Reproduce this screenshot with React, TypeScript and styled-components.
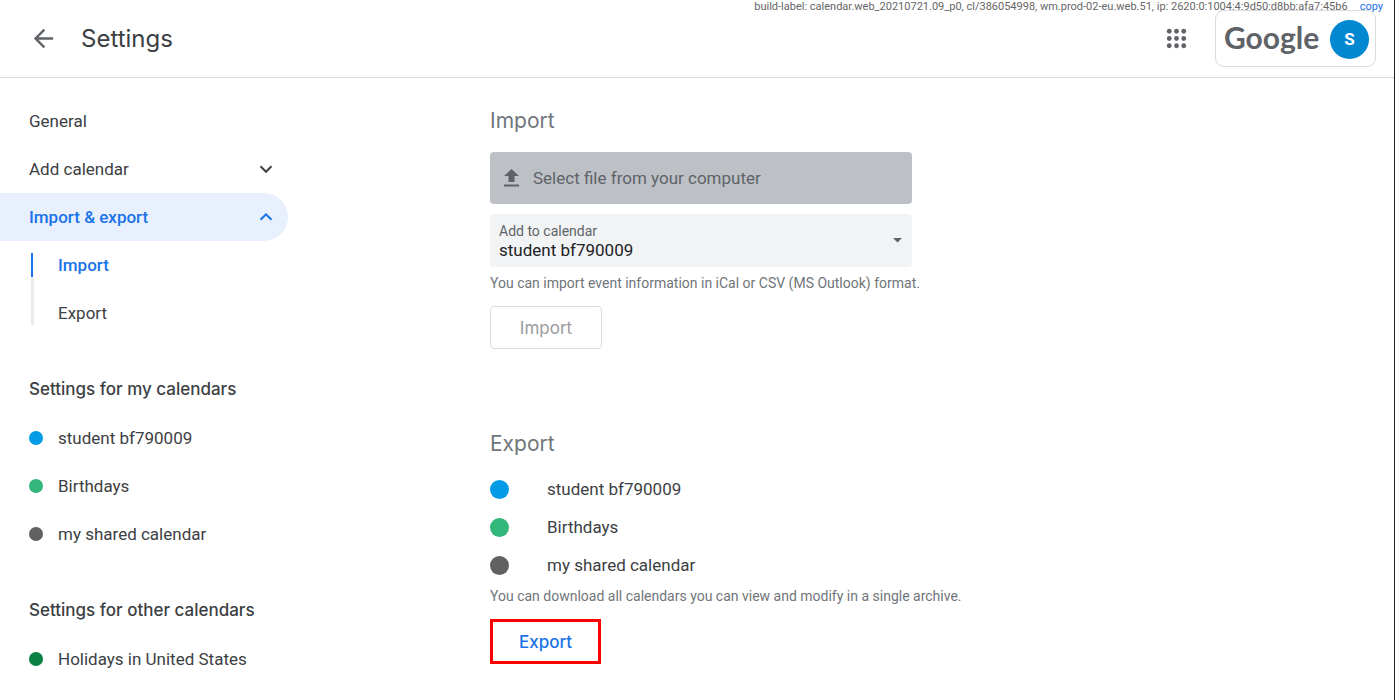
import React from "react";
import styled, { createGlobalStyle } from "styled-components";

const display = `Inter, Roboto, sans-serif`;

const GlobalStyle = createGlobalStyle`
  *, *::before, *::after { box-sizing: border-box; }
  body {
    margin: 0;
    background: #fff;
    color: #3c4043;
    font-family: Roboto, "Liberation Sans", sans-serif;
    font-size: 17px;
    line-height: 24px;
  }
  button, select { font: inherit; color: inherit; }
  a { color: inherit; text-decoration: none; }
  h1, h2, p, ul { margin: 0; padding: 0; }
  ul { list-style: none; }
  svg { display: block; flex: none; }
`;

const Page = styled.div`
  position: relative;
  min-height: 100vh;
  border-right: 1px solid #202124;
`;

const BuildLabel = styled.div`
  position: absolute;
  top: 0;
  right: 11px;
  display: flex;
  gap: 12px;
  font-size: 11px;
  line-height: 13px;
  color: #666;
  white-space: nowrap;
  a { color: #1a73e8; }
`;

const Header = styled.header`
  display: flex;
  align-items: center;
  height: 78px;
  padding: 0 18px 0 29px;
  border-bottom: 1px solid #dadce0;
`;

const IconButton = styled.button`
  display: flex;
  align-items: center;
  justify-content: center;
  width: 29px;
  height: 29px;
  padding: 0;
  border: 0;
  background: none;
  color: #5f6368;
  cursor: pointer;
`;

const PageTitle = styled.h1`
  flex: 1;
  padding-left: 23px;
  font-family: ${display};
  font-size: 24px;
  line-height: 32px;
  font-weight: 400;
`;

const AccountCard = styled.div`
  display: flex;
  align-items: center;
  justify-content: space-between;
  width: 161px;
  height: 57px;
  margin-left: 24px;
  padding: 1px 6px 0 8px;
  border: 1px solid #dadce0;
  border-radius: 9px;
`;

const Wordmark = styled.span`
  padding-bottom: 4px;
  font-family: Lato, sans-serif;
  font-size: 30px;
  line-height: 40px;
  font-weight: 700;
  color: #5f6368;
`;

const Avatar = styled.button`
  width: 39px;
  height: 39px;
  padding: 0;
  border: 0;
  border-radius: 50%;
  background: #0288d1;
  color: #fff;
  font-weight: 700;
  cursor: pointer;
`;

const Body = styled.div`
  display: flex;
  gap: 202px;
`;

const Sidebar = styled.nav`
  flex: none;
  width: 288px;
  padding-top: 19px;
`;

const NavRow = styled.button<{ $active?: boolean }>`
  display: flex;
  align-items: center;
  justify-content: space-between;
  width: 100%;
  height: 48px;
  padding: 0 12px 0 29px;
  border: 0;
  border-radius: 0 24px 24px 0;
  background: ${(p) => (p.$active ? "#e8f0fe" : "transparent")};
  color: ${(p) => (p.$active ? "#1a73e8" : "#3c4043")};
  font-weight: ${(p) => (p.$active ? 500 : 400)};
  text-align: left;
  cursor: pointer;
`;

const SubNav = styled.ul`
  display: flex;
  flex-direction: column;
  gap: 24px;
  margin: 12px 0 12px 31px;
  background: linear-gradient(#e8eaed, #e8eaed) 0 100% / 3px 48px no-repeat;
`;

const SubLink = styled.a<{ $active?: boolean }>`
  display: block;
  padding-left: 25px;
  border-left: 2px solid ${(p) => (p.$active ? "#1a73e8" : "transparent")};
  color: ${(p) => (p.$active ? "#1a73e8" : "#3c4043")};
  font-weight: ${(p) => (p.$active ? 500 : 400)};
`;

const NavGroup = styled.section`
  padding-top: 28px;
`;

const GroupTitle = styled.h2`
  padding-left: 29px;
  font-family: ${display};
  font-size: 17px;
  line-height: 49px;
  font-weight: 500;
`;

const CalendarLink = styled.a`
  display: flex;
  align-items: center;
  gap: 15px;
  height: 48px;
  padding-left: 29px;
`;

const Dot = styled.span<{ $color: string; $size: number }>`
  flex: none;
  width: ${(p) => p.$size}px;
  height: ${(p) => p.$size}px;
  border-radius: 50%;
  background: ${(p) => p.$color};
`;

const Main = styled.main`
  flex: 1;
  min-width: 0;
  padding: 27px 29px 29px 0;
`;

const Panel = styled.section`
  & + & { padding-top: 79px; }
`;

const PanelTitle = styled.h2`
  font-family: ${display};
  font-size: 21px;
  line-height: 32px;
  font-weight: 400;
  color: #70757a;
`;

const UploadButton = styled.button`
  display: flex;
  align-items: center;
  gap: 14px;
  width: 100%;
  max-width: 422px;
  height: 52px;
  margin: 15px 0 10px;
  padding: 0 14px;
  border: 0;
  border-radius: 4px;
  background: #bdc1c6;
  color: #5f6368;
  cursor: pointer;
`;

const SelectField = styled.div`
  position: relative;
  max-width: 422px;
  height: 53px;
  border-radius: 4px;
  background: #f1f3f4;
  color: #5f6368;
  svg {
    position: absolute;
    right: 10px;
    top: 24px;
    pointer-events: none;
  }
`;

const SelectLabel = styled.label`
  position: absolute;
  left: 9px;
  top: 8px;
  font-size: 14px;
  line-height: 18px;
  pointer-events: none;
`;

const Select = styled.select`
  appearance: none;
  width: 100%;
  height: 53px;
  padding: 21px 29px 2px 9px;
  border: 0;
  border-radius: 4px;
  background: transparent;
  color: #202124;
`;

const Hint = styled.p`
  font-size: 14px;
  line-height: 24px;
  color: #70757a;
`;

const ImportHint = styled(Hint)`
  margin: 4px 0 11px;
`;

const ExportHint = styled(Hint)`
  margin-bottom: 11px;
`;

const ActionButton = styled.button<{ $marked?: boolean }>`
  display: block;
  width: ${(p) => (p.$marked ? 111 : 112)}px;
  height: ${(p) => (p.$marked ? 45 : 43)}px;
  padding: 0;
  border: ${(p) => (p.$marked ? "3px solid #f00" : "1px solid #dadce0")};
  border-radius: ${(p) => (p.$marked ? 0 : 4)}px;
  background: #fff;
  color: ${(p) => (p.$marked ? "#1a73e8" : "#9a9a9a")};
  font-family: ${display};
  font-size: 17px;
  font-weight: ${(p) => (p.$marked ? 500 : 400)};
`;

const ExportList = styled.ul`
  padding-top: 10px;
`;

const ExportRow = styled.li`
  display: flex;
  align-items: center;
  gap: 38px;
  height: 38px;
`;

function Chevron({ up }: { up?: boolean }) {
  return (
    <svg width="20" height="20" viewBox="0 0 20 20" fill="none" stroke="currentColor" strokeWidth="2">
      <path d={up ? "M4.5 12.8 10 7.3l5.5 5.5" : "M4.5 7.3 10 12.8l5.5-5.5"} />
    </svg>
  );
}

const calendars = [
  { name: "student bf790009", color: "#039be5" },
  { name: "Birthdays", color: "#33b679" },
  { name: "my shared calendar", color: "#616161" },
];
const otherCalendars = [{ name: "Holidays in United States", color: "#0b8043" }];

function CalendarGroup({ title, items }: { title: string; items: typeof calendars }) {
  return (
    <NavGroup>
      <GroupTitle>{title}</GroupTitle>
      <ul>
        {items.map((c) => (
          <li key={c.name}>
            <CalendarLink href="#calendar">
              <Dot $color={c.color} $size={14} />
              {c.name}
            </CalendarLink>
          </li>
        ))}
      </ul>
    </NavGroup>
  );
}

export default function App() {
  return (
    <Page>
      <GlobalStyle />
      <Header>
        <IconButton aria-label="Go back">
          <svg width="29" height="29" viewBox="0 0 24 24" fill="currentColor">
            <path d="M20 11H7.83l5.59-5.59L12 4l-8 8 8 8 1.41-1.41L7.83 13H20v-2z" />
          </svg>
        </IconButton>
        <PageTitle>Settings</PageTitle>
        <IconButton aria-label="Google apps">
          <svg width="29" height="29" viewBox="0 0 24 24" fill="currentColor">
            {[6, 12, 18].map((y) => [6, 12, 18].map((x) => <circle key={`${x}-${y}`} cx={x} cy={y} r="2" />))}
          </svg>
        </IconButton>
        <AccountCard>
          <Wordmark>Google</Wordmark>
          <Avatar aria-label="Account S">S</Avatar>
        </AccountCard>
      </Header>
      <BuildLabel>
        <span>build-label: calendar.web_20210721.09_p0, cl/386054998, wm.prod-02-eu.web.51, ip: 2620:0:1004:4:9d50:d8bb:afa7:45b6</span>
        <a href="#copy">copy</a>
      </BuildLabel>
      <Body>
        <Sidebar>
          <NavRow>General</NavRow>
          <NavRow aria-expanded={false}>
            Add calendar
            <Chevron />
          </NavRow>
          <NavRow $active aria-expanded>
            Import &amp; export
            <Chevron up />
          </NavRow>
          <SubNav>
            <li><SubLink $active href="#import">Import</SubLink></li>
            <li><SubLink href="#export">Export</SubLink></li>
          </SubNav>
          <CalendarGroup title="Settings for my calendars" items={calendars} />
          <CalendarGroup title="Settings for other calendars" items={otherCalendars} />
        </Sidebar>
        <Main>
          <Panel id="import">
            <PanelTitle>Import</PanelTitle>
            <UploadButton>
              <svg width="15" height="18" viewBox="0 0 15 18" fill="currentColor">
                <path d="M4.5 13h6V7H15L7.5 0 0 7h4.5zM0 15.5h15v2H0z" />
              </svg>
              Select file from your computer
            </UploadButton>
            <SelectField>
              <SelectLabel htmlFor="target">Add to calendar</SelectLabel>
              <Select id="target">
                {calendars.map((c) => <option key={c.name}>{c.name}</option>)}
              </Select>
              <svg width="9" height="5" viewBox="0 0 9 5" fill="currentColor"><path d="M0 0h9L4.5 4.5z" /></svg>
            </SelectField>
            <ImportHint>You can import event information in iCal or CSV (MS Outlook) format.</ImportHint>
            <ActionButton disabled>Import</ActionButton>
          </Panel>
          <Panel id="export">
            <PanelTitle>Export</PanelTitle>
            <ExportList>
              {calendars.map((c) => (
                <ExportRow key={c.name}>
                  <Dot $color={c.color} $size={19} />
                  {c.name}
                </ExportRow>
              ))}
            </ExportList>
            <ExportHint>You can download all calendars you can view and modify in a single archive.</ExportHint>
            <ActionButton $marked>Export</ActionButton>
          </Panel>
        </Main>
      </Body>
    </Page>
  );
}
